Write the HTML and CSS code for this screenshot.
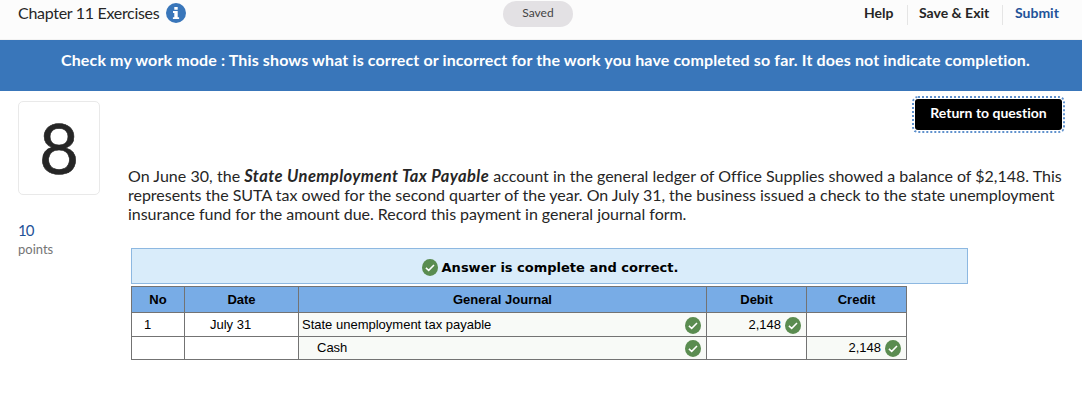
FILE: index.html
```html
<!DOCTYPE html>
<html lang="en">
<head>
<meta charset="utf-8">
<title>Chapter 11 Exercises</title>
<link rel="stylesheet" href="styles.css">
</head>
<body>
<svg width="0" height="0" class="defs">
  <symbol id="check" viewBox="0 0 16 17">
    <ellipse cx="8" cy="8.5" rx="8" ry="8.5" fill="#5a8c50"/>
    <path d="M3.9 8.9 L6.7 11.4 L12 6" fill="none" stroke="#fff" stroke-width="1.5"/>
  </symbol>
</svg>
<header class="top">
  <div class="title"><span class="title-text">Chapter 11 Exercises</span>
    <svg class="info" viewBox="0 0 20 20"><circle cx="10" cy="10" r="10" fill="#3976ba"/><path d="M8.3 4h3.4v2.7H8.3zM7 8.1h4.7v6.1h1.4v1.9H6.9v-1.9h1.4V10H7z" fill="#fff"/></svg>
  </div>
  <div class="saved"><span>Saved</span></div>
  <nav class="nav"><a class="help">Help</a><a class="exit">Save &amp; Exit</a><a class="submit">Submit</a></nav>
</header>
<div class="banner"><span>Check my work mode : This shows what is correct or incorrect for the work you have completed so far. It does not indicate completion.</span></div>
<main class="main">
  <aside class="side">
    <div class="number">8</div>
    <div class="score">10</div>
    <div class="points">points</div>
  </aside>
  <section class="content">
    <button class="return"><span>Return to question</span></button>
    <p class="question">
      <span class="line l1">On June 30, the <b>State Unemployment Tax Payable</b> <span class="rest">account in the general ledger of Office Supplies showed a balance of $2,148. This</span></span>
      <span class="line l2">represents the SUTA tax owed for the second quarter of the year. On July 31, the business issued a check to the state unemployment</span>
      <span class="line l3">insurance fund for the amount due. Record this payment in general journal form.</span>
    </p>
    <div class="answer"><svg class="check"><use href="#check"/></svg><span>Answer is complete and correct.</span></div>
    <div class="journal">
      <div class="head">No</div><div class="head">Date</div><div class="head">General Journal</div><div class="head">Debit</div><div class="head">Credit</div>
      <div class="cell no">1</div><div class="cell date">July 31</div>
      <div class="cell filled account"><span>State unemployment tax payable</span><svg class="check"><use href="#check"/></svg></div>
      <div class="cell filled amount"><span>2,148</span><svg class="check"><use href="#check"/></svg></div>
      <div class="cell"></div>
      <div class="cell"></div><div class="cell"></div>
      <div class="cell filled account indent"><span>Cash</span><svg class="check"><use href="#check"/></svg></div>
      <div class="cell"></div>
      <div class="cell filled amount"><span>2,148</span><svg class="check"><use href="#check"/></svg></div>
    </div>
  </section>
</main>
</body>
</html>
```

FILE: styles.css
```css
* { box-sizing: border-box; }
body { margin: 0; height: 403px; overflow: hidden; background: #fff; color: #262626; font-family: Lato, "Open Sans", sans-serif; font-variant-ligatures: none; }
.defs { position: absolute; }
.top { display: grid; grid-template-columns: 503px 70px 1fr; height: 40px; background: #fcfcfc; border-bottom: 1px solid #f2f2f2; align-items: start; }
.title { display: flex; padding: 3px 0 0 18px; gap: 7px; }
.title-text { width: 141px; font-size: 16px; line-height: 20px; letter-spacing: -0.3px; white-space: nowrap; }
.info { width: 20px; height: 20px; }
.saved { margin-top: 1px; height: 26px; border-radius: 13px; background: #e3e1e4; color: #444; font-size: 12px; line-height: 24px; text-align: center; }
.nav { display: flex; justify-content: flex-end; padding: 5px 22px 0 0; font-size: 14px; font-weight: 700; line-height: 16px; white-space: nowrap; }
.nav a { height: 20px; }
.help { width: 43px; }
.exit { width: 96px; padding-left: 11px; border-left: 1px solid #e5e5e5; border-right: 1px solid #e5e5e5; }
.submit { width: 57px; padding-left: 12px; color: #1f5399; }
.banner { height: 51px; padding: 10px 0 0 61px; background: #3976ba; color: #fff; font-size: 16px; font-weight: 700; line-height: 20px; letter-spacing: 0.13px; white-space: nowrap; }
.main { display: flex; padding-left: 18px; }
.side { width: 110px; padding-top: 10px; }
.number { width: 82px; height: 94px; border: 1px solid #e9e9e9; border-radius: 5px; text-align: center; font-size: 69px; line-height: 92px; -webkit-text-stroke: 0.6px #262626; }
.score { margin-top: 25px; font-size: 15px; line-height: 20px; letter-spacing: -1px; color: #1f5399; }
.points { font-size: 13px; line-height: 18px; color: #757575; }
.content { width: 954px; display: flex; flex-direction: column; }
.return { align-self: flex-end; margin: 8px 20px 0 0; width: 147px; height: 31px; padding: 0 0 3px; border: 0; border-radius: 3px; outline: 2px dotted #5f91cd; outline-offset: 1px; background: #000; color: #fff; font: 700 14px/20px Lato, sans-serif; font-variant-ligatures: none; white-space: nowrap; }
.question { margin: 36px 0 2px; font-size: 16px; line-height: 19px; }
.question b { font-style: italic; font-size: 16.5px; letter-spacing: 0.42px; line-height: 1; }
.line { display: block; white-space: nowrap; }
.l1 { letter-spacing: 0.04px; }
.rest { letter-spacing: 0; }
.l2 { letter-spacing: -0.02px; }
.l3 { letter-spacing: -0.03px; }
.answer { display: flex; align-items: center; justify-content: center; gap: 4px; width: 837px; height: 36px; margin: 23px 0 2px 3px; padding: 3px 0 0 1px; border: 1px solid #8db8e1; background: #d9ecfa; color: #000; font: 700 13px/20px "DejaVu Sans", sans-serif; }
.check { width: 16px; height: 17px; flex: none; }
.journal { display: grid; grid-template-columns: 52px 113px 407px 99px 99px; grid-template-rows: 25px 23px 22px; gap: 1px; width: 776px; padding: 1px; margin-left: 3px; background: #737373; color: #000; font: 13px/20px "Liberation Sans", Arial, sans-serif; }
.head { background: #78ace6; text-align: center; font-size: 13px; font-weight: 700; line-height: 25px; height: 25px; }
.cell { display: flex; align-items: center; background: #fff; }
.no { padding-left: 12px; }
.date { padding-left: 25px; }
.filled { background: #f8faf7; }
.account { justify-content: space-between; padding: 0 5px 0 3px; }
.indent { padding-left: 18px; }
.amount { justify-content: flex-end; gap: 4px; padding-right: 5px; }
.filled .check { margin-top: 1px; }
```
